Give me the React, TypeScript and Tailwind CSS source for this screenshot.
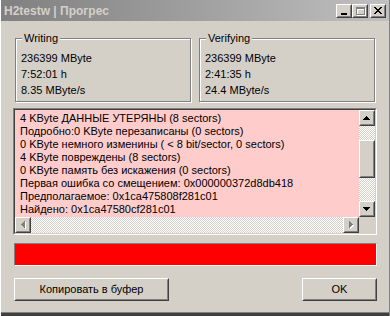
import React from "react";

const lines = [
  "4 KByte ДАННЫЕ УТЕРЯНЫ (8 sectors)",
  "Подробно:0 KByte перезаписаны (0 sectors)",
  "0 KByte немного изменины ( < 8 bit/sector, 0 sectors)",
  "4 KByte повреждены (8 sectors)",
  "0 KByte память без искажения (0 sectors)",
  "Первая ошибка со смещением: 0x000000372d8db418",
  "Предполагаемое: 0x1ca475808f281c01",
  "Найдено: 0x1ca47580cf281c01",
];

// classic 3D raised frame (buttons, scrollbar thumbs)
function Raised({ className = "", children }: { className?: string; children?: React.ReactNode }) {
  return (
    <div className={`border border-t-white border-l-white border-r-[#404040] border-b-[#404040] ${className}`}>
      <div className="w-full h-full border border-t-[#d4d0c8] border-l-[#d4d0c8] border-r-[#808080] border-b-[#808080] bg-[#d4d0c8] flex items-center justify-center">
        {children}
      </div>
    </div>
  );
}

function Arrow({ dir, disabled = false }: { dir: "up" | "down" | "left" | "right"; disabled?: boolean }) {
  const paths = {
    up: "M3 0h1v1h1v1h1v1h1v1H0V3h1V2h1V1h1z",
    down: "M0 0h7v1H6v1H5v1H4v1H3V3H2V2H1V1H0z",
    left: "M3 0h1v7H3V6H2V5H1V4H0V3h1V2h1V1h1z",
    right: "M0 0h1v1h1v1h1v1h1v1H3v1H2v1H1v1H0z",
  };
  const horiz = dir === "left" || dir === "right";
  const w = horiz ? 5 : 8;
  const h = horiz ? 8 : 5;
  return (
    <svg width={w} height={h} shapeRendering="crispEdges">
      {disabled && <path d={paths[dir]} fill="#ffffff" transform="translate(1,1)" />}
      <path d={paths[dir]} fill={disabled ? "#808080" : "#000000"} />
    </svg>
  );
}

function GroupBox({ title, rows }: { title: string; rows: string[] }) {
  return (
    <div className="relative w-[177px] h-[64px] border border-[#808080] shadow-[inset_1px_1px_0_#ffffff,1px_1px_0_#ffffff]">
      <span className="absolute left-[6px] -top-[8px] px-[2px] bg-[#d4d0c8] leading-[14px]">{title}</span>
      <div className="pt-[11px] pl-[5px] flex flex-col">
        {rows.map((r) => (
          <div key={r} className="leading-[16px] h-[16px]">{r}</div>
        ))}
      </div>
    </div>
  );
}

export default function App() {
  return (
    <div className="w-[390px] h-[316px] bg-[#d4d0c8] flex flex-col text-[11px] text-black font-['Liberation_Sans',Arial,sans-serif] border-l border-l-white border-r border-r-[#808080] overflow-hidden">
      {/* title bar */}
      <div className="h-[21px] shrink-0 flex items-center pl-[3px] pr-[3px] bg-gradient-to-r from-[#808080] to-[#c0c0c0]">
        <span className="text-[12px] font-bold text-[#d4d0c8] flex-1">H2testw | Прогрес</span>
        <div className="flex items-center">
          <Raised className="w-[16px] h-[14px]">
            <div className="w-[6px] h-[2px] bg-black mt-[6px] -ml-[1px]" />
          </Raised>
          <Raised className="w-[16px] h-[14px]">
            <div className="relative w-[9px] h-[8px]">
              <div className="absolute left-[1px] top-[1px] w-[9px] h-[8px] border border-white border-t-2" />
              <div className="absolute left-0 top-0 w-[9px] h-[8px] border border-[#808080] border-t-2" />
            </div>
          </Raised>
          <Raised className="w-[16px] h-[14px] ml-[2px]">
            <svg width="8" height="7" shapeRendering="crispEdges">
              <path d="M0 0h2v1h1v1h2V1h1V0h2v1H7v1H6v1H5v1h1v1h1v1h1v1H6V6H5V5H3v1H2v1H0V6h1V5h1V4h1V3H2V2H1V1H0z" fill="#000" />
            </svg>
          </Raised>
        </div>
      </div>

      <div className="flex flex-col px-[12px]">
        {/* stats */}
        <div className="flex gap-[8px] px-[2px] mt-[17px]">
          <GroupBox title="Writing" rows={["236399 MByte", "7:52:01 h", "8.35 MByte/s"]} />
          <GroupBox title="Verifying" rows={["236399 MByte", "2:41:35 h", "24.4 MByte/s"]} />
        </div>

        {/* log list */}
        <div className="mt-[6px] h-[127px] border border-t-[#808080] border-l-[#808080] border-r-white border-b-white">
          <div className="w-full h-full border border-t-[#404040] border-l-[#404040] border-r-[#d4d0c8] border-b-[#d4d0c8] flex flex-col">
            <div className="flex flex-1 min-h-0">
              <div className="flex-1 min-w-0 overflow-hidden bg-[#ffcccc] pt-[2px] pl-[5px]">
                {lines.map((l) => (
                  <div key={l} className="whitespace-nowrap leading-[13px] h-[13px]">{l}</div>
                ))}
              </div>
              <div className="w-[16px] flex flex-col">
                <Raised className="w-[16px] h-[16px] shrink-0">
                  <Arrow dir="up" />
                </Raised>
                <div className="flex-1 flex flex-col bg-[repeating-conic-gradient(#ffffff_0%_25%,#d4d0c8_0%_50%)] bg-[length:2px_2px]">
                  <div className="h-[14px]" />
                  <Raised className="w-[16px] h-[38px]" />
                </div>
                <Raised className="w-[16px] h-[16px] shrink-0">
                  <Arrow dir="down" />
                </Raised>
              </div>
            </div>
            <div className="flex h-[16px] shrink-0">
              <Raised className="w-[16px] h-[16px]">
                <Arrow dir="left" disabled />
              </Raised>
              <div className="flex-1 bg-[repeating-conic-gradient(#ffffff_0%_25%,#d4d0c8_0%_50%)] bg-[length:2px_2px]" />
              <Raised className="w-[16px] h-[16px]">
                <Arrow dir="right" disabled />
              </Raised>
              <div className="w-[16px] bg-[#d4d0c8]" />
            </div>
          </div>
        </div>

        {/* progress bar */}
        <div className="mt-[8px] h-[23px] ml-[1px] border border-t-[#808080] border-l-[#808080] border-r-white border-b-white bg-[#ff0000]" />

        {/* buttons */}
        <div className="mt-[12px] flex justify-between pl-[1px]">
          <Raised className="w-[155px] h-[23px]">
            <span>Копировать в буфер</span>
          </Raised>
          <Raised className="w-[75px] h-[23px]">
            <span>OK</span>
          </Raised>
        </div>
      </div>

      <div className="mt-auto h-[1px] bg-[#808080]" />
      <div className="h-[3px] bg-[#404040]" />
    </div>
  );
}
